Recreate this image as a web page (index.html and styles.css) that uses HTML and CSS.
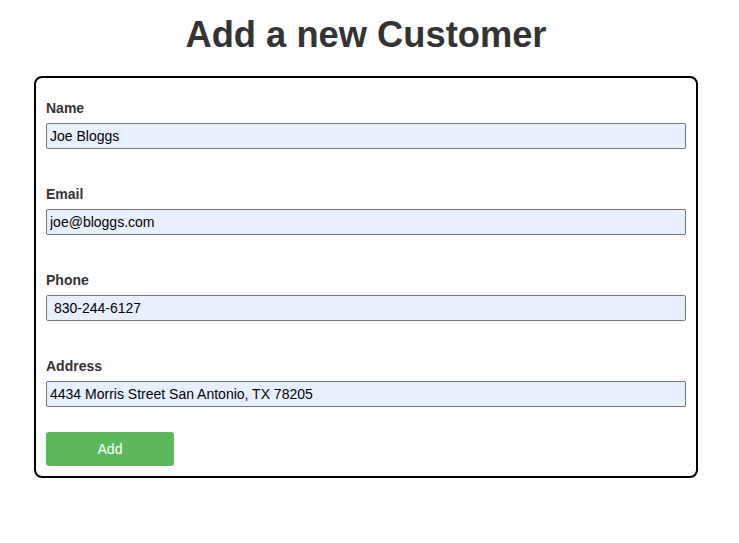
FILE: index.html
```html
<!DOCTYPE html>
<html>
<head>
<meta charset="utf-8">
<link rel="stylesheet" href="styles.css">
</head>
<body>
<h1 class="title">Add a new Customer</h1>
<form class="card">
  <div class="field">
    <label class="label">Name</label>
    <input class="input" type="text" value="Joe Bloggs">
  </div>
  <div class="field">
    <label class="label">Email</label>
    <input class="input" type="text" value="joe@bloggs.com">
  </div>
  <div class="field">
    <label class="label">Phone</label>
    <input class="input" type="text" value=" 830-244-6127">
  </div>
  <div class="field">
    <label class="label">Address</label>
    <input class="input" type="text" value="4434 Morris Street San Antonio, TX 78205">
  </div>
  <button class="btn" type="button">Add</button>
</form>
</body>
</html>
```
FILE: styles.css
```css
html, body {
  margin: 0;
  padding: 0;
  background: #fff;
}
body {
  font-family: "Liberation Sans", Arial, Helvetica, sans-serif;
  color: #333;
}
.title {
  margin: 0 41px 0 34px;
  padding-top: 14px;
  height: 76px;
  box-sizing: border-box;
  text-align: center;
  font-size: 36.3px;
  line-height: 42px;
  font-weight: bold;
  color: #333;
}
.card {
  margin: 0 41px 0 34px;
  border: 2px solid #000;
  border-radius: 8px;
  padding: 10px 10px 10px 10px;
  display: flex;
  flex-direction: column;
}
.field {
  display: flex;
  flex-direction: column;
  padding-top: 12px;
  margin-bottom: 25px;
}
.field:last-of-type {
  margin-bottom: 25px;
}
.label {
  font-size: 14px;
  line-height: 16px;
  font-weight: bold;
  color: #333;
  margin-bottom: 7px;
}
.input {
  box-sizing: border-box;
  height: 26px;
  margin: 0;
  padding: 0 3px;
  border: 1px solid #767676;
  border-radius: 2px;
  background: #e8f0fe;
  font-family: "Liberation Sans", Arial, Helvetica, sans-serif;
  font-size: 14px;
  color: #000;
  width: 100%;
}
.btn {
  width: 128px;
  height: 34px;
  margin: 0;
  border: none;
  border-radius: 3px;
  background: #5cb85c;
  color: #fff;
  font-family: "Liberation Sans", Arial, Helvetica, sans-serif;
  font-size: 14px;
  padding: 0;
}
```
